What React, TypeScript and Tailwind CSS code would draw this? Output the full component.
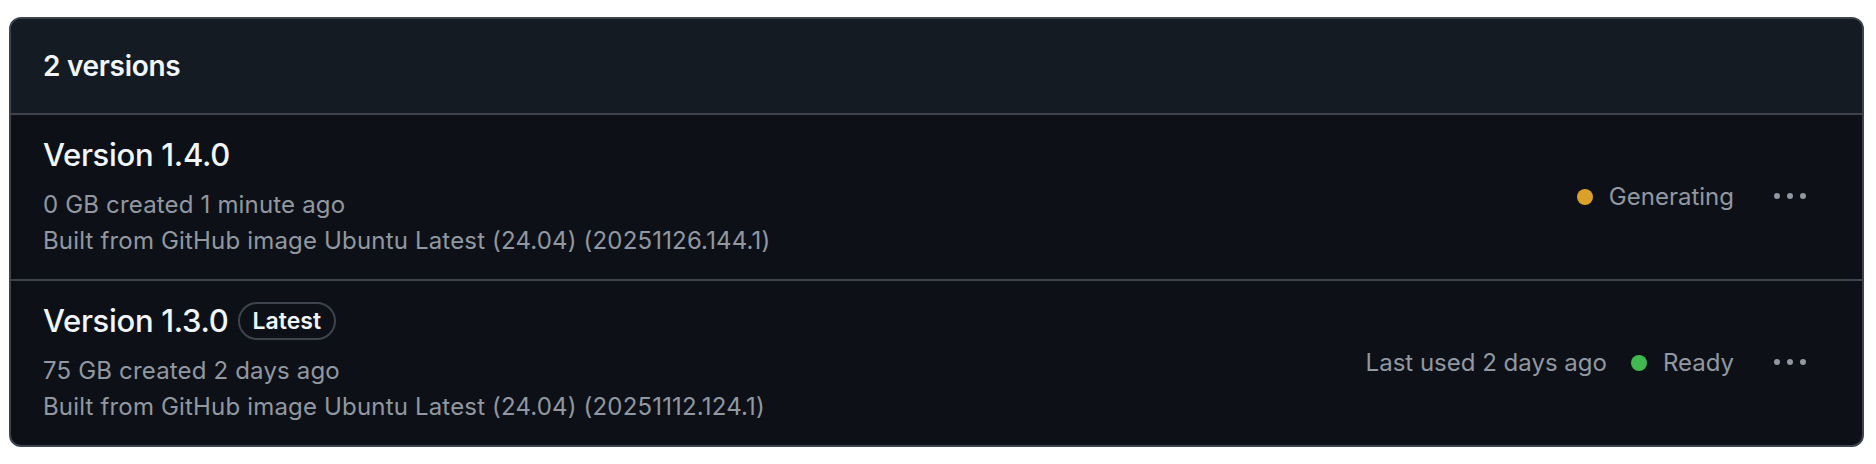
import React from 'react';

type Version = {
  name: string;
  latest?: boolean;
  meta: string;
  built: string;
  lastUsed?: string;
  status: 'generating' | 'ready';
};

const versions: Version[] = [
  {
    name: 'Version 1.4.0',
    meta: '0 GB created 1 minute ago',
    built: 'Built from GitHub image Ubuntu Latest (24.04) (20251126.144.1)',
    status: 'generating',
  },
  {
    name: 'Version 1.3.0',
    latest: true,
    meta: '75 GB created 2 days ago',
    built: 'Built from GitHub image Ubuntu Latest (24.04) (20251112.124.1)',
    lastUsed: 'Last used 2 days ago',
    status: 'ready',
  },
];

function KebabIcon() {
  return (
    <svg viewBox="0 0 16 16" className="h-8 w-8 fill-[#9198a1]">
      <path d="M8 9a1.5 1.5 0 1 0 0-3 1.5 1.5 0 0 0 0 3ZM1.5 9a1.5 1.5 0 1 0 0-3 1.5 1.5 0 0 0 0 3Zm13 0a1.5 1.5 0 1 0 0-3 1.5 1.5 0 0 0 0 3Z" />
    </svg>
  );
}

function VersionRow({ v }: { v: Version }) {
  return (
    <div className="flex items-center border-t-2 border-[#3d444d] pl-[32px] pr-[40px] pt-[20px] pb-[20px]">
      <div className="flex-1 min-w-0">
        <div className="flex items-center h-[40px] gap-[9px]">
          <h3 className="text-[31px] leading-[40px] font-medium tracking-[-0.3px] text-[#f0f6fc]">{v.name}</h3>
          {v.latest && (
            <span className="h-[38px] px-[13px] rounded-full border-2 border-[#3d444d] text-[23px] leading-[34px] font-semibold text-[#f0f6fc]">
              Latest
            </span>
          )}
        </div>
        <div className="mt-[12px] text-[24px] leading-[36px] tracking-[0.17px] text-[#9198a1]">
          <div>{v.meta}</div>
          <div>{v.built}</div>
        </div>
      </div>

      <div className="flex items-center text-[24px] leading-[36px] text-[#9198a1]">
        {v.lastUsed && <span className="mr-[24px]">{v.lastUsed}</span>}
        <span
          className={
            v.status === 'ready'
              ? 'h-[16px] w-[16px] rounded-full bg-[#3fb950]'
              : 'h-[16px] w-[16px] rounded-full bg-[#d9a12a]'
          }
        />
        <span className="ml-[16px]">{v.status === 'ready' ? 'Ready' : 'Generating'}</span>
        <button className="ml-[24px] flex h-[64px] w-[64px] items-center justify-center rounded-[12px]">
          <KebabIcon />
        </button>
      </div>
    </div>
  );
}

export default function App() {
  return (
    <main className="min-h-screen bg-white pl-[9px] pr-[12px] pt-[17px] pb-[18px] font-['Inter','Liberation_Sans',sans-serif]">
      <div className="overflow-hidden rounded-[12px] border-2 border-[#3d444d] bg-[#0d1117]">
        <header className="bg-[#151b23] px-[32px] py-[27px]">
          <h2 className="text-[28px] leading-[40px] font-semibold tracking-[-0.3px] text-[#f0f6fc]">2 versions</h2>
        </header>
        {versions.map((v) => (
          <VersionRow key={v.name} v={v} />
        ))}
      </div>
    </main>
  );
}
